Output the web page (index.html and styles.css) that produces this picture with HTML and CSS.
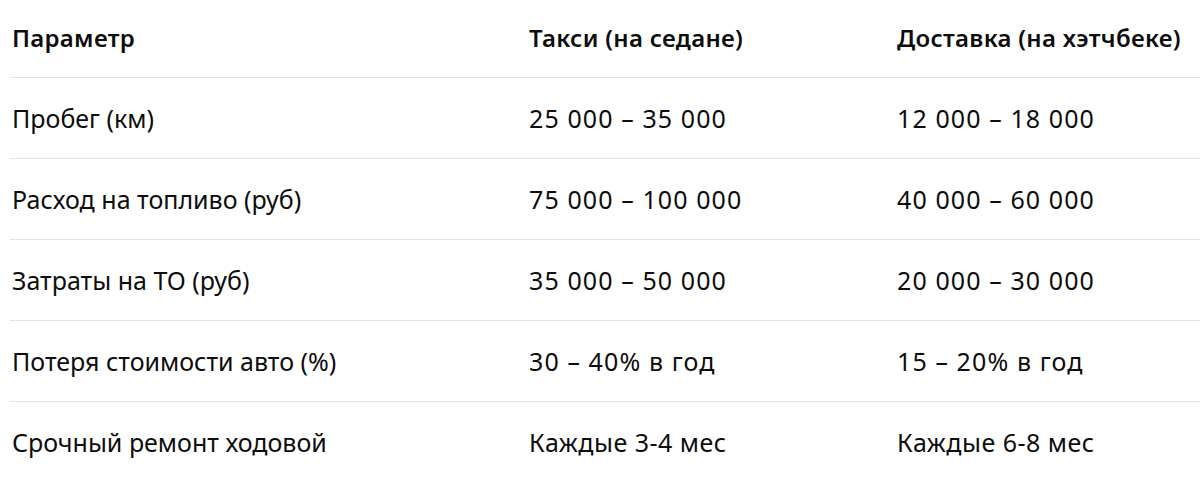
FILE: index.html
```html
<!DOCTYPE html>
<html lang="ru">
<head>
<meta charset="utf-8">
<link rel="stylesheet" href="styles.css">
</head>
<body>
<table class="cmp">
  <thead>
    <tr><th>Параметр</th><th>Такси (на седане)</th><th>Доставка (на хэтчбеке)</th></tr>
  </thead>
  <tbody>
    <tr><td>Пробег (км)</td><td>25 000 – 35 000</td><td>12 000 – 18 000</td></tr>
    <tr><td>Расход на топливо (руб)</td><td>75 000 – 100 000</td><td>40 000 – 60 000</td></tr>
    <tr><td>Затраты на ТО (руб)</td><td>35 000 – 50 000</td><td>20 000 – 30 000</td></tr>
    <tr><td>Потеря стоимости авто (%)</td><td>30 – 40% в год</td><td>15 – 20% в год</td></tr>
    <tr class="last"><td>Срочный ремонт ходовой</td><td>Каждые 3-4 мес</td><td>Каждые 6-8 мес</td></tr>
  </tbody>
</table>
</body>
</html>
```

FILE: styles.css
```css
html, body {
  margin: 0;
  padding: 0;
  background: #ffffff;
}
body {
  font-family: "Noto Sans", "Open Sans", sans-serif;
  color: #0d0d0d;
  overflow: hidden;
}
.cmp {
  margin: -3px 0 0 10px;
  width: 1200px;
  border-collapse: collapse;
  table-layout: fixed;
  font-size: 25px;
}
.cmp th, .cmp td {
  text-align: left;
  padding: 0 0 0 2px;
  height: 80px;
  border-bottom: 1px solid #e3e3e3;
  white-space: nowrap;
  vertical-align: middle;
}
.cmp th {
  font-weight: 600;
  font-size: 24px;
  letter-spacing: 0.3px;
}
.cmp td:nth-child(n+2) { letter-spacing: 1.1px; }
.cmp tr.last td:nth-child(n+2) { letter-spacing: 0.5px; }
.cmp th:nth-child(1), .cmp td:nth-child(1) { width: 515px; }
.cmp th:nth-child(2), .cmp td:nth-child(2) { width: 366px; }
.cmp tr.last td { border-bottom: none; }
```
